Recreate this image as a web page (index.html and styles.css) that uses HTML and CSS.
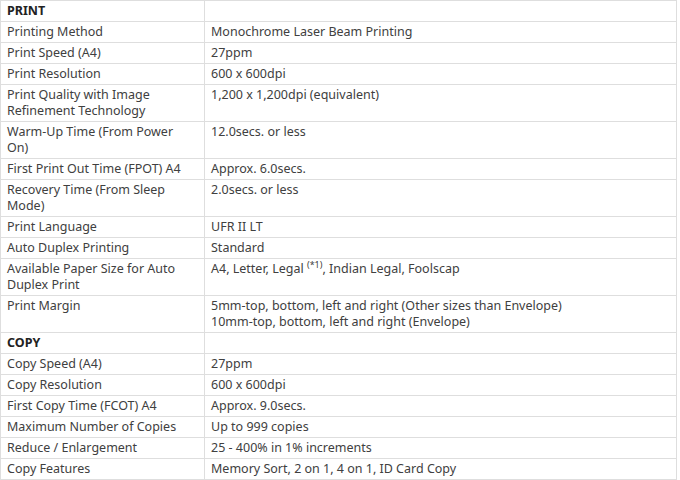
FILE: index.html
```html
<!DOCTYPE html>
<html>
<head>
<meta charset="utf-8">
<link rel="stylesheet" href="styles.css">
</head>
<body>
<table class="spec">
  <colgroup><col class="c1"><col class="c2"></colgroup>
  <tr class="sec"><th>PRINT</th><td></td></tr>
  <tr><td>Printing Method</td><td>Monochrome Laser Beam Printing</td></tr>
  <tr><td>Print Speed (A4)</td><td>27ppm</td></tr>
  <tr><td>Print Resolution</td><td>600 x 600dpi</td></tr>
  <tr><td>Print Quality with Image Refinement Technology</td><td>1,200 x 1,200dpi (equivalent)</td></tr>
  <tr><td>Warm-Up Time (From Power On)</td><td>12.0secs. or less</td></tr>
  <tr><td>First Print Out Time (FPOT) A4</td><td>Approx. 6.0secs.</td></tr>
  <tr><td>Recovery Time (From Sleep Mode)</td><td>2.0secs. or less</td></tr>
  <tr><td>Print Language</td><td>UFR II LT</td></tr>
  <tr><td>Auto Duplex Printing</td><td>Standard</td></tr>
  <tr><td>Available Paper Size for Auto Duplex Print</td><td>A4, Letter, Legal <sup>(*1)</sup>, Indian Legal, Foolscap</td></tr>
  <tr><td>Print Margin</td><td>5mm-top, bottom, left and right (Other sizes than Envelope)<br>10mm-top, bottom, left and right (Envelope)</td></tr>
  <tr class="sec"><th>COPY</th><td></td></tr>
  <tr><td>Copy Speed (A4)</td><td>27ppm</td></tr>
  <tr><td>Copy Resolution</td><td>600 x 600dpi</td></tr>
  <tr><td>First Copy Time (FCOT) A4</td><td>Approx. 9.0secs.</td></tr>
  <tr><td>Maximum Number of Copies</td><td>Up to 999 copies</td></tr>
  <tr><td>Reduce / Enlargement</td><td>25 - 400% in 1% increments</td></tr>
  <tr><td>Copy Features</td><td>Memory Sort, 2 on 1, 4 on 1, ID Card Copy</td></tr>
</table>
</body>
</html>
```
FILE: styles.css
```css
html, body {
  margin: 0;
  padding: 0;
  background: #fff;
}
.spec {
  border-collapse: collapse;
  width: 677px;
  table-layout: fixed;
  font-family: "Noto Sans", "Open Sans", sans-serif;
  font-size: 12.5px;
  line-height: 16px;
  color: #404040;
}
.c1 { width: 204px; }
.spec td, .spec th {
  border: 1px solid #dedede;
  padding: 2px 9px 2px 6px;
  vertical-align: top;
  text-align: left;
  font-weight: normal;
}
.spec .sec th {
  font-weight: bold;
  color: #222;
}
.spec sup {
  font-size: 9px;
  line-height: 0;
  vertical-align: 5px;
}
```
